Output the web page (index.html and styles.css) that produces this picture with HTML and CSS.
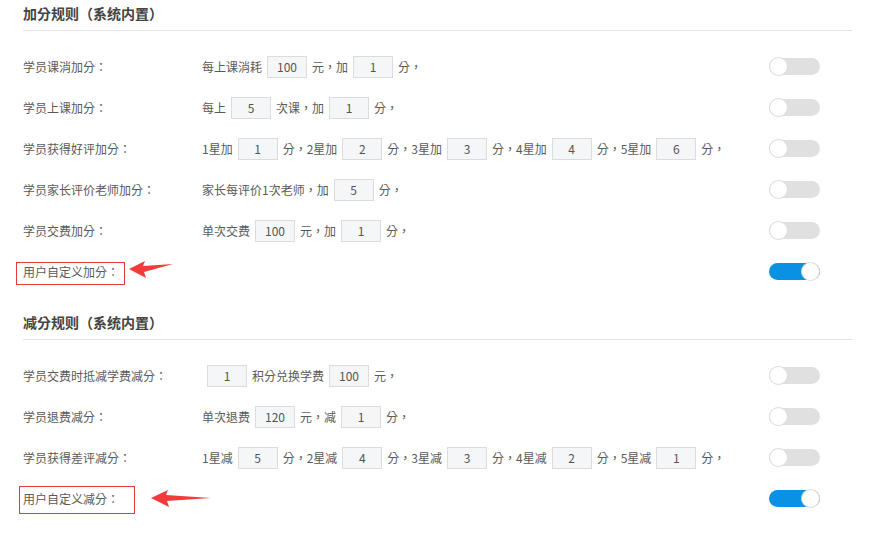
FILE: index.html
```html
<!DOCTYPE html>
<html lang="zh-CN">
<head>
    <meta charset="UTF-8">
    <meta name="viewport" content="width=device-width, initial-scale=1.0">
    <title>积分规则</title>
    <link rel="stylesheet" href="styles.css">
</head>
<body>
    <div class="rules">
        <!-- 加分规则 -->
        <div class="section">
            <h3 class="section-title">加分规则（系统内置）</h3>
            <div class="rows">
                <div class="row">
                    <div class="label">学员课消加分：</div>
                    <div class="content">每上课消耗<span class="num">100</span>元，加<span class="num">1</span>分，</div>
                    <div class="switch"><span class="knob"></span></div>
                </div>
                <div class="row">
                    <div class="label">学员上课加分：</div>
                    <div class="content">每上<span class="num">5</span>次课，加<span class="num">1</span>分，</div>
                    <div class="switch"><span class="knob"></span></div>
                </div>
                <div class="row">
                    <div class="label">学员获得好评加分：</div>
                    <div class="content">1星加<span class="num">1</span>分，2星加<span class="num">2</span>分，3星加<span class="num">3</span>分，4星加<span class="num">4</span>分，5星加<span class="num">6</span>分，</div>
                    <div class="switch"><span class="knob"></span></div>
                </div>
                <div class="row">
                    <div class="label">学员家长评价老师加分：</div>
                    <div class="content">家长每评价1次老师，加<span class="num">5</span>分，</div>
                    <div class="switch"><span class="knob"></span></div>
                </div>
                <div class="row">
                    <div class="label">学员交费加分：</div>
                    <div class="content">单次交费<span class="num">100</span>元，加<span class="num">1</span>分，</div>
                    <div class="switch"><span class="knob"></span></div>
                </div>
                <div class="row">
                    <div class="label">用户自定义加分：</div>
                    <div class="content"></div>
                    <div class="switch on"><span class="knob"></span></div>
                    <span class="mark mark-add"></span>
                    <svg class="arrow arrow-add" width="44" height="18" viewBox="0 0 44 18">
                        <polygon points="0,8 16,0 14,5 44,3 15,11 17,17" fill="#f23b3b"/>
                    </svg>
                </div>
            </div>
        </div>

        <!-- 减分规则 -->
        <div class="section">
            <h3 class="section-title">减分规则（系统内置）</h3>
            <div class="rows">
                <div class="row">
                    <div class="label">学员交费时抵减学费减分：</div>
                    <div class="content"><span class="num">1</span>积分兑换学费<span class="num">100</span>元，</div>
                    <div class="switch"><span class="knob"></span></div>
                </div>
                <div class="row">
                    <div class="label">学员退费减分：</div>
                    <div class="content">单次退费<span class="num">120</span>元，减<span class="num">1</span>分，</div>
                    <div class="switch"><span class="knob"></span></div>
                </div>
                <div class="row">
                    <div class="label">学员获得差评减分：</div>
                    <div class="content">1星减<span class="num">5</span>分，2星减<span class="num">4</span>分，3星减<span class="num">3</span>分，4星减<span class="num">2</span>分，5星减<span class="num">1</span>分，</div>
                    <div class="switch"><span class="knob"></span></div>
                </div>
                <div class="row">
                    <div class="label">用户自定义减分：</div>
                    <div class="content"></div>
                    <div class="switch on"><span class="knob"></span></div>
                    <span class="mark mark-sub"></span>
                    <svg class="arrow arrow-sub" width="60" height="17" viewBox="0 0 60 17">
                        <polygon points="0,8 17,0 15,5 60,8 16,11 18,17" fill="#f23b3b"/>
                    </svg>
                </div>
            </div>
        </div>
    </div>
</body>
</html>
```

FILE: styles.css
```css
body {
    margin: 0;
    padding: 0;
    background: #ffffff;
    font-family: "Noto Sans CJK TC", "Noto Sans CJK SC", sans-serif;
    font-feature-settings: "locl" 0;
    font-size: 12px;
    color: #5a5a5a;
}
.rules {
    width: 829px;
    margin-left: 23px;
}
.section + .section {
    margin-top: 17px;
}
.section-title {
    margin: 0;
    height: 30px;
    line-height: 26px;
    font-size: 14px;
    font-weight: bold;
    color: #444;
    border-bottom: 1px solid #e4e4e4;
}
.rows {
    margin-top: 15px;
}
.row {
    position: relative;
    display: flex;
    align-items: center;
    height: 41px;
    padding-right: 32px;
}
.label {
    width: 179px;
    flex-shrink: 0;
}
.content {
    flex: 1;
    display: flex;
    align-items: center;
    white-space: nowrap;
}
.num {
    display: inline-block;
    box-sizing: border-box;
    width: 40px;
    height: 22px;
    line-height: 20px;
    margin: 0 5px;
    text-align: center;
    background: #f5f6f8;
    border: 1px solid #dcdcdc;
    color: #555;
}
.switch {
    position: relative;
    width: 51px;
    height: 17px;
    border-radius: 9px;
    background: #e0e0e0;
    flex-shrink: 0;
}
.switch .knob {
    position: absolute;
    left: 0;
    top: -1px;
    box-sizing: border-box;
    width: 19px;
    height: 19px;
    border-radius: 50%;
    background: #fff;
    border: 1px solid #dcdcdc;
}
.switch.on {
    background: #0a91e4;
}
.switch.on .knob {
    left: auto;
    right: 0;
}
/* 标注 */
.mark {
    position: absolute;
    box-sizing: border-box;
    border: 1px solid #e8393a;
}
.mark-add {
    left: -7px;
    top: 11px;
    width: 109px;
    height: 23px;
}
.mark-sub {
    left: -4px;
    top: 8px;
    width: 116px;
    height: 28px;
}
.arrow {
    position: absolute;
}
.arrow-add {
    left: 106px;
    top: 10px;
}
.arrow-sub {
    left: 128px;
    top: 12px;
}
```
